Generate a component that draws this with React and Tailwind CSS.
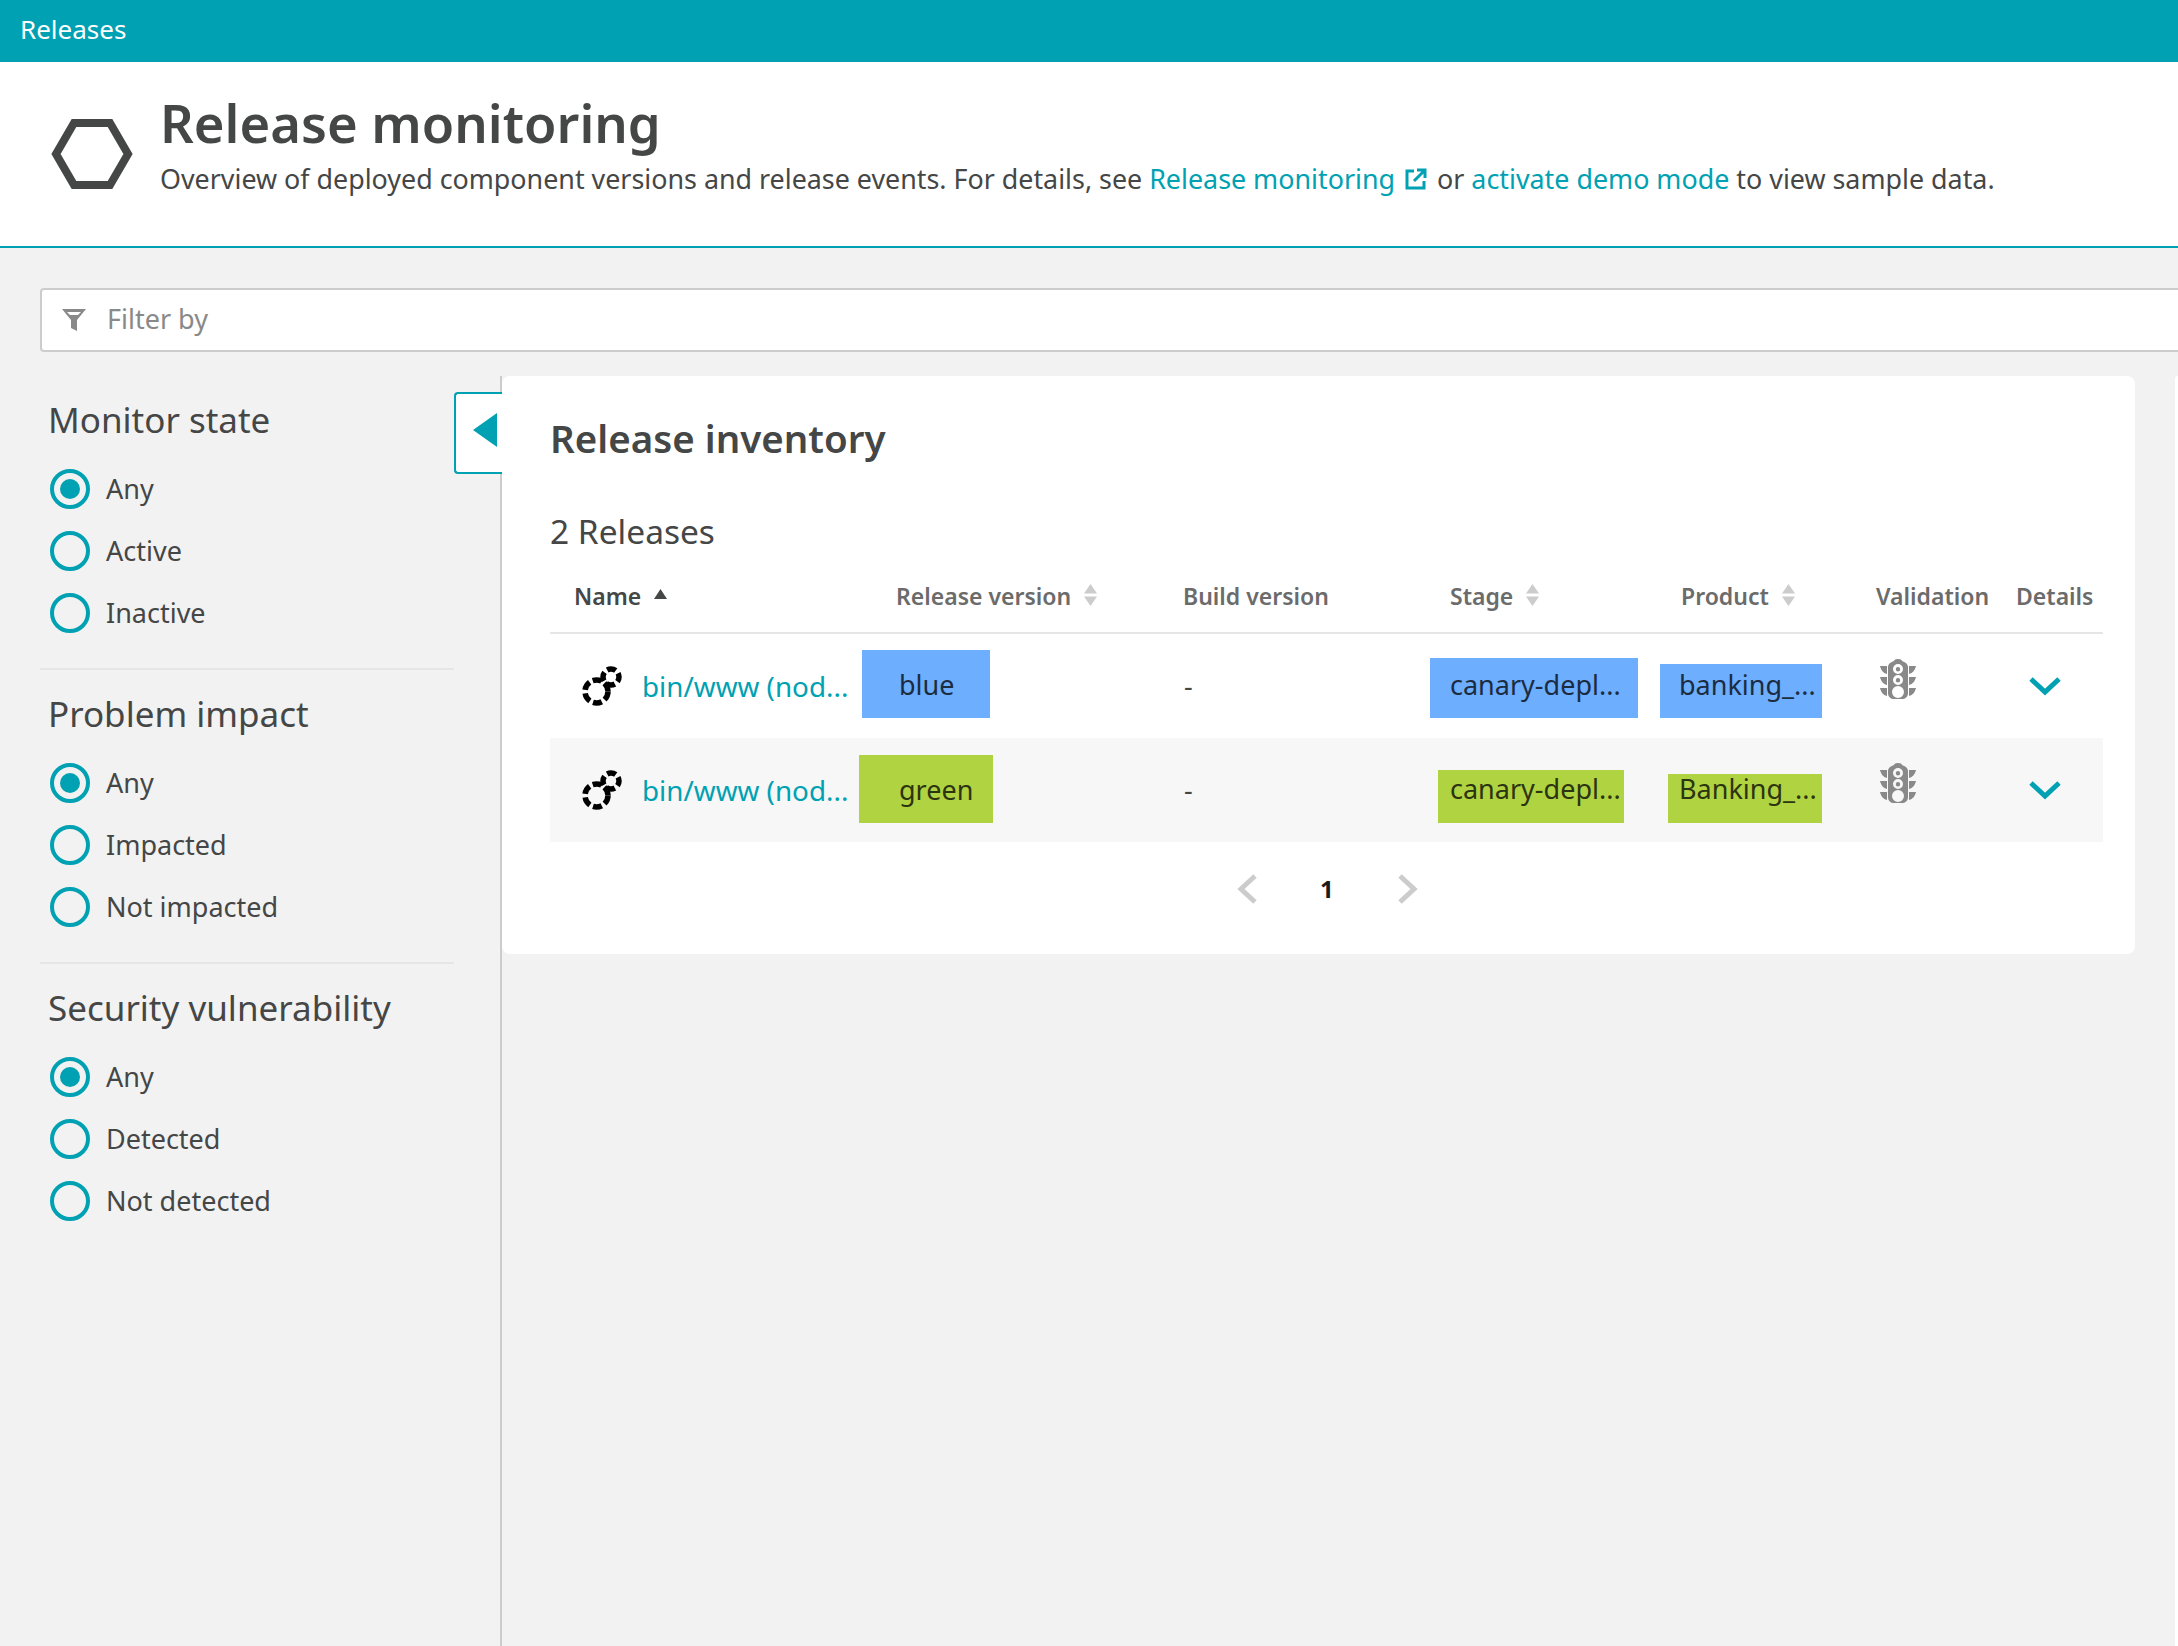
import { Fragment } from "react";

const font = "font-['Noto_Sans',sans-serif]";

const filters = [
  { title: "Monitor state", options: ["Any", "Active", "Inactive"] },
  { title: "Problem impact", options: ["Any", "Impacted", "Not impacted"] },
  { title: "Security vulnerability", options: ["Any", "Detected", "Not detected"] },
];

const columns = "grid grid-cols-[309px_317px_254px_230px_216px_140px_87px]";

function Radio({ checked, label }) {
  return (
    <div className="flex items-center h-[40px]">
      <span className="w-[40px] h-[40px] rounded-full border-[4px] border-[#00a1b2] flex items-center justify-center ml-[10px]">
        {checked && <span className="w-[20px] h-[20px] rounded-full bg-[#00a1b2]" />}
      </span>
      <span className="ml-[16px] -mt-[1px] text-[27px] leading-[40px] text-[#454646]">{label}</span>
    </div>
  );
}

function SortArrows() {
  return (
    <svg width="13" height="22" viewBox="0 0 13 22" className="ml-[13px] -mt-[2px] shrink-0">
      <path d="M6.5 0 13 9.5H0z" fill="#cccccc" />
      <path d="M6.5 22 0 12.5h13z" fill="#cccccc" />
    </svg>
  );
}

function LinkIcon() {
  return (
    <svg width="40" height="40" viewBox="0 0 40 40" className="shrink-0">
      <circle cx="14.5" cy="25.5" r="11.5" fill="none" stroke="#000" strokeWidth="5.5" strokeDasharray="9 3.5" />
      <circle cx="29" cy="11" r="8" fill="none" stroke="#000" strokeWidth="5.5" strokeDasharray="9 3.5" strokeDashoffset="4" />
    </svg>
  );
}

function TrafficLight() {
  return (
    <svg width="36" height="40" viewBox="0 0 36 40">
      <path fill="#898989" d="M0 7h7v8C3 14 1 11 0 7zM36 7h-7v8c4-1 6-4 7-8zM0 18h7v8c-4-1-6-4-7-8zM36 18h-7v8c4-1 6-4 7-8zM0 29h7v8c-4-1-6-4-7-8zM36 29h-7v8c4-1 6-4 7-8z" />
      <path fill="#898989" fillRule="evenodd" d="M14 2c0-1 1-2 4-2s4 1 4 2c3 1 6 3 6 6v26c0 4-3 6-6 6h-8c-3 0-6-2-6-6V8c0-3 3-5 6-6zM18 5a5 5 0 1 0 0 10a5 5 0 0 0 0-10zm0 3a2.2 2.2 0 1 1 0 4.4a2.2 2.2 0 0 1 0-4.4zM18 16a5 5 0 1 0 0 10a5 5 0 0 0 0-10zm0 3a2.2 2.2 0 1 1 0 4.4a2.2 2.2 0 0 1 0-4.4zM18 27a6 6 0 1 0 0 12a6 6 0 0 0 0-12z" />
    </svg>
  );
}

function Chevron() {
  return (
    <svg width="32" height="20" viewBox="0 0 32 20">
      <path d="M2 3 16 16 30 3" fill="none" stroke="#00a1b2" strokeWidth="5" />
    </svg>
  );
}

function Tag({ className, children }) {
  return <span className={`block text-[27px] leading-[30px] whitespace-nowrap ${className}`}>{children}</span>;
}

function Row({ striped, version, stage, product }) {
  return (
    <div className={`${columns} h-[104px] ${striped ? "bg-[#f7f7f7]" : "bg-white"}`}>
      <div className="flex items-center pl-[32px]">
        <LinkIcon />
        <a className="ml-[20px] text-[27.8px] leading-[30px] text-[#00a1b2] whitespace-nowrap">bin/www (nod...</a>
      </div>
      <div className="flex items-start">{version}</div>
      <div className="flex items-center pl-[8px] text-[27px] text-[#454646]">-</div>
      <div className="flex items-start">{stage}</div>
      <div className="flex items-start">{product}</div>
      <div className="flex items-start pl-[4px] pt-[25px]">
        <TrafficLight />
      </div>
      <div className="flex items-center pl-[13px]">
        <Chevron />
      </div>
    </div>
  );
}

function Header({ label, sort, className }) {
  return (
    <div className={`flex items-center text-[23px] font-semibold text-[#6b6b6b] whitespace-nowrap ${className}`}>
      {label}
      {sort && <SortArrows />}
    </div>
  );
}

export default function App() {
  return (
    <div className={`${font} w-[2178px] h-[1646px] overflow-hidden bg-[#f2f2f2] flex flex-col`}>
      <div className="h-[62px] shrink-0 bg-[#00a1b2] flex items-center pl-[20px] pb-[4px] text-[26px] text-white">Releases</div>

      <div className="h-[186px] shrink-0 bg-white border-b-[2px] border-[#00a1b2] flex items-center pl-[51px]">
        <svg width="82" height="70" viewBox="0 0 82 70" className="shrink-0">
          <path d="M23 4h36l18 31-18 31H23L5 35z" fill="none" stroke="#454646" strokeWidth="8" />
        </svg>
        <div className="ml-[27px] -mt-[20px]">
          <h1 className="text-[52.6px] leading-[64px] mb-[6px] font-semibold text-[#454646]">Release monitoring</h1>
          <p className="text-[26.85px] leading-[36px] text-[#454646] flex items-center whitespace-nowrap">
            Overview of deployed component versions and release events. For details, see&nbsp;
            <a className="text-[#00a1b2]">Release monitoring</a>
            <svg width="22" height="22" viewBox="0 0 22 22" className="mx-[10px]">
              <path d="M9 3H2v17h17v-7M12 2h8v8M20 2 9 13" fill="none" stroke="#00a1b2" strokeWidth="3" />
            </svg>
            or&nbsp;<a className="text-[#00a1b2]">activate demo mode</a>&nbsp;to view sample data.
          </p>
        </div>
      </div>

      <div className="h-[128px] shrink-0 pt-[40px] pl-[40px]">
        <div className="h-[64px] w-[2300px] bg-white border-[2px] border-[#cccccc] rounded-l-[4px] flex items-center pl-[20px]">
          <svg width="24" height="24" viewBox="0 0 24 24">
            <path d="M0 1h24L15 12v11l-6-3v-8z" fill="#898989" />
            <path d="M5 4h14l-3 3H8z" fill="#ffffff" />
          </svg>
          <span className="ml-[21px] -mt-[2px] text-[27px] text-[#898989]">Filter by</span>
        </div>
      </div>

      <div className="flex-1 flex min-h-0">
        <aside className="relative w-[502px] shrink-0 border-r-[2px] border-[#cccccc] pt-[21px]">
          {filters.map((group, i) => (
            <Fragment key={group.title}>
              <div className="pl-[40px] w-[454px]">
                <h2 className="pl-[8px] pt-[1px] text-[35px] leading-[44px] text-[#454646]">{group.title}</h2>
                <div className="mt-[27px] flex flex-col gap-[22px]">
                  {group.options.map((opt, j) => (
                    <Radio key={opt} label={opt} checked={j === 0} />
                  ))}
                </div>
                {i < 2 && <div className="mt-[35px] mb-[21px] h-[2px] bg-[#e6e6e6]" />}
              </div>
            </Fragment>
          ))}
          <div className="absolute left-[454px] top-[16px] w-[48px] h-[82px] bg-white border-[2px] border-r-0 border-[#00a1b2] rounded-l-[4px] flex items-center pl-[17px] pb-[6px]">
            <svg width="24" height="34" viewBox="0 0 24 34">
              <path d="M24 0v34L0 17z" fill="#00a1b2" />
            </svg>
          </div>
        </aside>

        <div className="flex-1 flex items-start min-w-0">
          <main className="w-[1633px] h-[578px] shrink-0 bg-white rounded-[8px] pl-[48px] pr-[32px] pt-[37px] text-[#454646]">
            <h2 className="text-[38.5px] leading-[50px] font-semibold">Release inventory</h2>
            <div className="mt-[45px] text-[33.5px] leading-[46px]">2 Releases</div>
            <div className={`${columns} h-[72px] mt-[8px] border-b-[2px] border-[#e6e6e6] pb-[2px]`}>
              <div className="flex items-center pl-[24px] text-[23px] font-semibold whitespace-nowrap">
                Name
                <svg width="13" height="10" viewBox="0 0 13 10" className="ml-[13px] -mt-[4px]">
                  <path d="M6.5 0 13 10H0z" fill="#454646" />
                </svg>
              </div>
              <Header label="Release version" sort className="pl-[37px]" />
              <Header label="Build version" className="pl-[7px]" />
              <Header label="Stage" sort className="pl-[20px]" />
              <Header label="Product" sort className="pl-[21px]" />
              <Header label="Validation" />
              <Header label="Details" />
            </div>
            <Row
              version={<Tag className="ml-[3px] mt-[16px] w-[128px] h-[68px] pl-[37px] pt-[20px] bg-[#6daeff] text-[#1c2c40]">blue</Tag>}
              stage={<Tag className="mt-[24px] w-[208px] h-[60px] pl-[20px] pt-[12px] bg-[#6daeff] text-[#1c2c40]">canary-depl...</Tag>}
              product={<Tag className="mt-[30px] w-[162px] h-[54px] pl-[19px] pt-[6px] bg-[#6daeff] text-[#1c2c40]">banking_...</Tag>}
            />
            <Row
              striped
              version={<Tag className="mt-[17px] w-[134px] h-[68px] pl-[40px] pt-[20px] bg-[#b0d342] text-[#2c3410]">green</Tag>}
              stage={<Tag className="ml-[8px] mt-[32px] w-[186px] h-[53px] pl-[12px] pt-[4px] bg-[#b0d342] text-[#2c3410]">canary-depl...</Tag>}
              product={<Tag className="ml-[8px] mt-[36px] w-[154px] h-[49px] pl-[11px] bg-[#b0d342] text-[#2c3410]">Banking_...</Tag>}
            />
            <div className="mt-[32px] flex items-center ml-[687px]">
              <svg width="20" height="30" viewBox="0 0 20 30">
                <path d="M18 2 4 15l14 13" fill="none" stroke="#cccccc" strokeWidth="5" />
              </svg>
              <span className="ml-[63px] w-[12px] text-[24px] leading-[30px] font-bold text-[#1a1a1a]">1</span>
              <svg width="20" height="30" viewBox="0 0 20 30" className="ml-[66px]">
                <path d="M2 2l14 13L2 28" fill="none" stroke="#cccccc" strokeWidth="5" />
              </svg>
            </div>
          </main>
          <div className="ml-[40px] w-[40px] h-full bg-white rounded-tl-[8px]" />
        </div>
      </div>
    </div>
  );
}
